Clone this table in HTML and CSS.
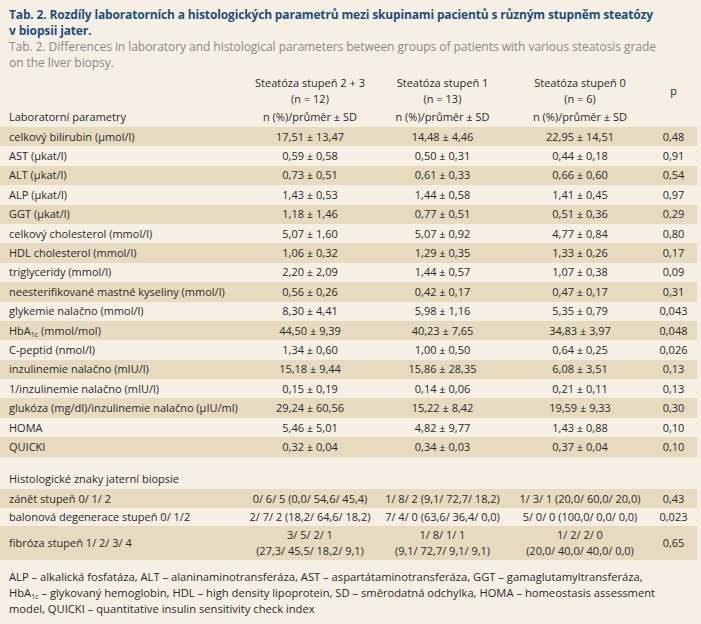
FILE: index.html
```html
<!DOCTYPE html>
<html lang="cs">
<head>
<meta charset="utf-8">
<title>Tab. 2</title>
<link rel="stylesheet" href="styles.css">
</head>
<body>
<div class="page">
  <div class="caption">
    <div class="title">Tab. 2. Rozdíly laboratorních a histologických parametrů mezi skupinami pacientů s různým stupněm steatózy v biopsii jater.</div>
    <div class="subtitle">Tab. 2. Differences in laboratory and histological parameters between groups of patients with various steatosis grade on the liver biopsy.</div>
  </div>
  <table class="data">
    <colgroup>
      <col class="c-label"><col class="c-g1"><col class="c-g2"><col class="c-g3"><col class="c-p">
    </colgroup>
    <thead>
      <tr class="h1">
        <th class="lab"></th>
        <th>Steatóza stupeň 2 + 3<br>(n = 12)</th>
        <th>Steatóza stupeň 1<br>(n = 13)</th>
        <th>Steatóza stupeň 0<br>(n = 6)</th>
        <th class="p">p</th>
      </tr>
      <tr class="h2">
        <th class="lab">Laboratorní parametry</th>
        <th>n (%)/průměr ± SD</th>
        <th>n (%)/průměr ± SD</th>
        <th>n (%)/průměr ± SD</th>
        <th></th>
      </tr>
    </thead>
    <tbody class="lab-rows">
      <tr class="dk"><td class="lab">celkový bilirubin (µmol/l)</td><td>17,51 ± 13,47</td><td>14,48 ± 4,46</td><td>22,95 ± 14,51</td><td>0,48</td></tr>
      <tr><td class="lab">AST (µkat/l)</td><td>0,59 ± 0,58</td><td>0,50 ± 0,31</td><td>0,44 ± 0,18</td><td>0,91</td></tr>
      <tr class="dk"><td class="lab">ALT (µkat/l)</td><td>0,73 ± 0,51</td><td>0,61 ± 0,33</td><td>0,66 ± 0,60</td><td>0,54</td></tr>
      <tr><td class="lab">ALP (µkat/l)</td><td>1,43 ± 0,53</td><td>1,44 ± 0,58</td><td>1,41 ± 0,45</td><td>0,97</td></tr>
      <tr class="dk"><td class="lab">GGT (µkat/l)</td><td>1,18 ± 1,46</td><td>0,77 ± 0,51</td><td>0,51 ± 0,36</td><td>0,29</td></tr>
      <tr><td class="lab">celkový cholesterol (mmol/l)</td><td>5,07 ± 1,60</td><td>5,07 ± 0,92</td><td>4,77 ± 0,84</td><td>0,80</td></tr>
      <tr class="dk"><td class="lab">HDL cholesterol (mmol/l)</td><td>1,06 ± 0,32</td><td>1,29 ± 0,35</td><td>1,33 ± 0,26</td><td>0,17</td></tr>
      <tr><td class="lab">triglyceridy (mmol/l)</td><td>2,20 ± 2,09</td><td>1,44 ± 0,57</td><td>1,07 ± 0,38</td><td>0,09</td></tr>
      <tr class="dk"><td class="lab">neesterifikované mastné kyseliny (mmol/l)</td><td>0,56 ± 0,26</td><td>0,42 ± 0,17</td><td>0,47 ± 0,17</td><td>0,31</td></tr>
      <tr><td class="lab">glykemie nalačno (mmol/l)</td><td>8,30 ± 4,41</td><td>5,98 ± 1,16</td><td>5,35 ± 0,79</td><td>0,043</td></tr>
      <tr class="dk"><td class="lab">HbA<sub>1c</sub> (mmol/mol)</td><td>44,50 ± 9,39</td><td>40,23 ± 7,65</td><td>34,83 ± 3,97</td><td>0,048</td></tr>
      <tr><td class="lab">C-peptid (nmol/l)</td><td>1,34 ± 0,60</td><td>1,00 ± 0,50</td><td>0,64 ± 0,25</td><td>0,026</td></tr>
      <tr class="dk"><td class="lab">inzulinemie nalačno (mIU/l)</td><td>15,18 ± 9,44</td><td>15,86 ± 28,35</td><td>6,08 ± 3,51</td><td>0,13</td></tr>
      <tr><td class="lab">1/inzulinemie nalačno (mIU/l)</td><td>0,15 ± 0,19</td><td>0,14 ± 0,06</td><td>0,21 ± 0,11</td><td>0,13</td></tr>
      <tr class="dk"><td class="lab">glukóza (mg/dl)/inzulinemie nalačno (µIU/ml)</td><td>29,24 ± 60,56</td><td>15,22 ± 8,42</td><td>19,59 ± 9,33</td><td>0,30</td></tr>
      <tr><td class="lab">HOMA</td><td>5,46 ± 5,01</td><td>4,82 ± 9,77</td><td>1,43 ± 0,88</td><td>0,10</td></tr>
      <tr class="dk"><td class="lab">QUICKI</td><td>0,32 ± 0,04</td><td>0,34 ± 0,03</td><td>0,37 ± 0,04</td><td>0,10</td></tr>
    </tbody>
    <tbody class="hist-rows">
      <tr class="spacer"><td colspan="5"></td></tr>
      <tr class="sect"><td class="lab" colspan="5">Histologické znaky jaterní biopsie</td></tr>
      <tr class="dk"><td class="lab">zánět stupeň 0/ 1/ 2</td><td>0/ 6/ 5 (0,0/ 54,6/ 45,4)</td><td>1/ 8/ 2 (9,1/ 72,7/ 18,2)</td><td>1/ 3/ 1 (20,0/ 60,0/ 20,0)</td><td>0,43</td></tr>
      <tr class="short"><td class="lab">balonová degenerace stupeň 0/ 1/2</td><td>2/ 7/ 2 (18,2/ 64,6/ 18,2)</td><td>7/ 4/ 0 (63,6/ 36,4/ 0,0)</td><td>5/ 0/ 0 (100,0/ 0,0/ 0,0)</td><td>0,023</td></tr>
      <tr class="dk two"><td class="lab">fibróza stupeň 1/ 2/ 3/ 4</td><td>3/ 5/ 2/ 1<br>(27,3/ 45,5/ 18,2/ 9,1)</td><td>1/ 8/ 1/ 1<br>(9,1/ 72,7/ 9,1/ 9,1)</td><td>1/ 2/ 2/ 0<br>(20,0/ 40,0/ 40,0/ 0,0)</td><td>0,65</td></tr>
    </tbody>
  </table>
  <p class="note">ALP – alkalická fosfatáza, ALT – alaninaminotransferáza, AST – aspartátaminotransferáza, GGT – gamaglutamyltransferáza, HbA<sub>1c</sub> – glykovaný hemoglobin, HDL – high density lipoprotein, SD – směrodatná odchylka, HOMA – homeostasis assessment model, QUICKI – quantitative insulin sensitivity check index</p>
</div>
</body>
</html>
```

FILE: styles.css
```css
html, body {
  margin: 0;
  padding: 0;
  background: #f6f0e4;
}
body {
  font-family: "Open Sans", "Noto Sans", sans-serif;
  color: #2b2b2b;
  font-size: 11px;
}
.page {
  width: 697px;
  min-height: 624px;
  background: #f6f0e4;
}
.caption {
  width: 648px;
  padding: 7px 0 0 9px;
}
.title {
  font-size: 12px;
  font-weight: 700;
  line-height: 16px;
  color: #1e4f7d;
  letter-spacing: -0.15px;
}
.subtitle {
  font-size: 12px;
  line-height: 16px;
  color: #8a8a8a;
  letter-spacing: -0.05px;
}
.data {
  width: 697px;
  border-collapse: collapse;
  table-layout: fixed;
  margin-top: 4px;
}
.c-label { width: 245px; }
.c-g1 { width: 130px; }
.c-g2 { width: 135px; }
.c-g3 { width: 140px; }
.c-p { width: 47px; }
th {
  font-weight: 400;
  text-align: center;
  padding: 0;
  line-height: 16px;
  vertical-align: bottom;
}
th.lab, td.lab {
  text-align: left;
  padding-left: 9px;
}
.h1 th { vertical-align: middle; }
.h2 th { height: 20px; vertical-align: middle; }
td {
  text-align: center;
  padding: 0;
  height: 19.4px;
  line-height: 14px;
  white-space: nowrap;
}
tr.dk td { background: #e6dbbf; }
tr.spacer td { height: 13px; }
tr.sect td { height: 19.4px; }
tr.short td { height: 17.4px; }
tr.two td { height: 34px; line-height: 16px; }
sub {
  font-size: 7px;
  line-height: 0;
  vertical-align: -2px;
}
.note {
  margin: 0;
  width: 650px;
  padding: 9px 0 0 9px;
  font-size: 11.2px;
  line-height: 16px;
}
```
